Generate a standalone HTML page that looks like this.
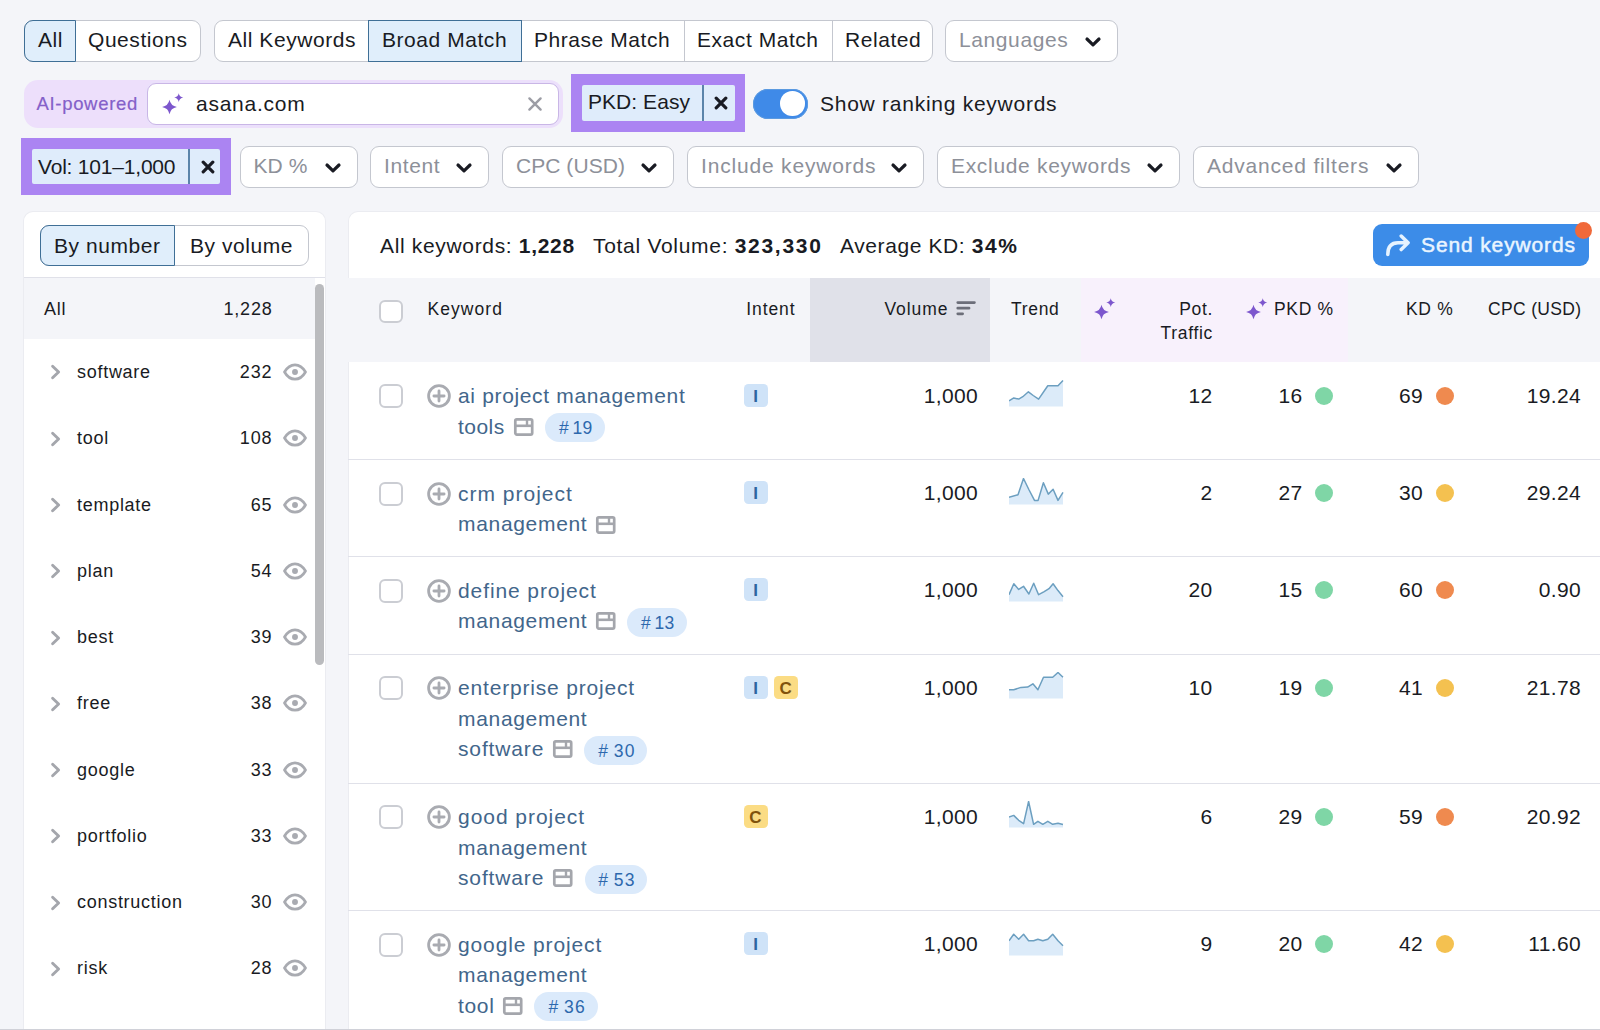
<!DOCTYPE html>
<html lang="en">
<head>
<meta charset="utf-8">
<title>Keyword Magic Tool</title>
<style>
*{box-sizing:border-box;margin:0;padding:0}
html,body{width:1600px;height:1030px;overflow:hidden}
body{background:#f4f5f9;font-family:"Liberation Sans",Arial,sans-serif;color:#191b23;position:relative;font-size:21px}
.abs{position:absolute}
.t{position:absolute;white-space:nowrap;line-height:1}
/* pill button groups */
.grp{position:absolute;height:41.5px;background:#fff;border:1px solid #c4c7cf;border-radius:9px}
.seg{position:absolute;top:-1px;height:41.5px;border-left:1px solid #c4c7cf}
.sel{position:absolute;height:41.5px;background:#e0eefb;border:1.5px solid #3f6f96}
.lbl{position:absolute;top:20px;height:42px;line-height:40px;font-size:21px;letter-spacing:.55px;white-space:nowrap;color:#191b23}
.dd{position:absolute;height:42px;background:#fff;border:1px solid #c4c7cf;border-radius:9px}
.dd span{position:absolute;left:13px;top:0;line-height:38px;font-size:21px;letter-spacing:.6px;color:#8d9099;white-space:nowrap}
.dd svg{position:absolute;right:15px;top:15px}
.chip{position:absolute;background:#ab84f2}
.chip .in{position:absolute;background:#dfecfb;border-radius:2px}
.chip .tx{position:absolute;font-size:21px;letter-spacing:.5px;white-space:nowrap;line-height:35px;color:#191b23}
.chip .dv{position:absolute;width:1.5px;background:#5b84aa}
/* panels */
.panel{position:absolute;background:#fff}
</style>
</head>
<body>

<!-- ===== Row 1: tab groups ===== -->
<div class="grp" style="left:24px;top:20px;width:177px"></div>
<div class="sel" style="left:24px;top:20px;width:52px;border-radius:9px 0 0 9px"></div>
<div class="lbl" style="left:38px">All</div>
<div class="lbl" style="left:88px">Questions</div>

<div class="grp" style="left:214px;top:20px;width:719px"></div>
<div class="sel" style="left:368px;top:20px;width:154px"></div>
<div class="abs" style="left:684px;top:21px;width:1px;height:40px;background:#c4c7cf"></div>
<div class="abs" style="left:832px;top:21px;width:1px;height:40px;background:#c4c7cf"></div>
<div class="lbl" style="left:228px">All Keywords</div>
<div class="lbl" style="left:382px">Broad Match</div>
<div class="lbl" style="left:534px">Phrase Match</div>
<div class="lbl" style="left:697px">Exact Match</div>
<div class="lbl" style="left:845px">Related</div>

<div class="dd" style="left:945px;top:20px;width:173px"><span>Languages</span>
<svg width="18" height="12" viewBox="0 0 18 12"><path d="M3 3 L9 8.8 L15 3" fill="none" stroke="#191b23" stroke-width="3.2" stroke-linecap="round" stroke-linejoin="round"/></svg></div>

<!-- ===== Row 2: AI-powered input, PKD chip, toggle ===== -->
<div class="abs" style="left:24px;top:80px;width:539px;height:48px;background:#eddffb;border-radius:14px"></div>
<div class="t" style="left:36.5px;top:94.5px;font-size:18.5px;letter-spacing:.68px;color:#8460c9;-webkit-text-stroke:.2px #8460c9">AI-powered</div>
<div class="abs" style="left:147.3px;top:83.3px;width:411.5px;height:41.4px;background:#fff;border:1.5px solid #c9b6e6;border-radius:9px;box-shadow:0 0 0 2px #ebe0fb"></div>
<svg class="abs" style="left:160.75px;top:92px" width="24" height="24" viewBox="0 0 24 24"><path d="M8.5 7.8 Q9.68 13.85 15.9 15 Q9.68 16.15 8.5 22.2 Q7.32 16.15 1.1 15 Q7.32 13.85 8.5 7.8Z" fill="#7d57cd"/><path d="M17.75 1.2 Q18.47 4.9 22.25 5.6 Q18.47 6.3 17.75 10 Q17.03 6.3 13.25 5.6 Q17.03 4.9 17.75 1.2Z" fill="#7d57cd"/></svg>
<div class="t" style="left:196px;top:93px;font-size:21px;letter-spacing:.75px">asana.com</div>
<svg class="abs" style="left:527.1px;top:95.900px" width="16" height="16" viewBox="0 0 16 16"><path d="M2.400 2.400 L13.600 13.600 M13.600 2.400 L2.400 13.600" stroke="#9c9da5" stroke-width="2.400" stroke-linecap="round"/></svg>

<div class="chip" style="left:571px;top:74px;width:174px;height:57.7px">
  <div class="in" style="left:10.5px;top:11.2px;width:153px;height:35.6px"></div>
  <div class="dv" style="left:131px;top:11.2px;height:35.6px"></div>
  <div class="tx" style="left:17px;top:10.3px;letter-spacing:.05px">PKD: Easy</div>
  <svg class="abs" style="left:143.2px;top:22px" width="14" height="14" viewBox="0 0 14 14"><path d="M2.2 2.2 L11.8 11.8 M11.8 2.2 L2.2 11.8" stroke="#191b23" stroke-width="3.2" stroke-linecap="round"/></svg>
</div>

<div class="abs" style="left:753px;top:88.5px;width:55px;height:30px;border-radius:15px;background:#3f8ae8;box-shadow:0 0 0 1px #5b9ae0 inset"></div>
<div class="abs" style="left:780.3px;top:91.3px;width:24.5px;height:24.5px;border-radius:50%;background:#fff"></div>
<div class="t" style="left:820px;top:93px;font-size:21px;letter-spacing:.74px">Show ranking keywords</div>

<!-- ===== Row 3: filters ===== -->
<div class="chip" style="left:21px;top:137.5px;width:209.5px;height:57.5px">
  <div class="in" style="left:11px;top:11.3px;width:188px;height:35.4px"></div>
  <div class="dv" style="left:167px;top:11.3px;height:35.4px"></div>
  <div class="tx" style="left:17px;top:11.3px;letter-spacing:-.2px">Vol: 101–1,000</div>
  <svg class="abs" style="left:179.8px;top:22.8px" width="14" height="14" viewBox="0 0 14 14"><path d="M2.2 2.2 L11.8 11.8 M11.8 2.2 L2.2 11.8" stroke="#191b23" stroke-width="3.2" stroke-linecap="round"/></svg>
</div>

<div class="dd" style="left:240px;top:146px;width:118px"><span style="letter-spacing:.1px;left:12.5px">KD %</span><svg width="18" height="12" viewBox="0 0 18 12"><path d="M3 3 L9 8.8 L15 3" fill="none" stroke="#191b23" stroke-width="3.2" stroke-linecap="round" stroke-linejoin="round"/></svg></div>
<div class="dd" style="left:370px;top:146px;width:119px"><span>Intent</span><svg width="18" height="12" viewBox="0 0 18 12"><path d="M3 3 L9 8.8 L15 3" fill="none" stroke="#191b23" stroke-width="3.2" stroke-linecap="round" stroke-linejoin="round"/></svg></div>
<div class="dd" style="left:502px;top:146px;width:172px"><span style="letter-spacing:.05px">CPC (USD)</span><svg width="18" height="12" viewBox="0 0 18 12"><path d="M3 3 L9 8.8 L15 3" fill="none" stroke="#191b23" stroke-width="3.2" stroke-linecap="round" stroke-linejoin="round"/></svg></div>
<div class="dd" style="left:687px;top:146px;width:237px"><span style="letter-spacing:.82px">Include keywords</span><svg width="18" height="12" viewBox="0 0 18 12"><path d="M3 3 L9 8.8 L15 3" fill="none" stroke="#191b23" stroke-width="3.2" stroke-linecap="round" stroke-linejoin="round"/></svg></div>
<div class="dd" style="left:937px;top:146px;width:243px"><span style="letter-spacing:.68px">Exclude keywords</span><svg width="18" height="12" viewBox="0 0 18 12"><path d="M3 3 L9 8.8 L15 3" fill="none" stroke="#191b23" stroke-width="3.2" stroke-linecap="round" stroke-linejoin="round"/></svg></div>
<div class="dd" style="left:1193px;top:146px;width:226px"><span style="letter-spacing:.8px">Advanced filters</span><svg width="18" height="12" viewBox="0 0 18 12"><path d="M3 3 L9 8.8 L15 3" fill="none" stroke="#191b23" stroke-width="3.2" stroke-linecap="round" stroke-linejoin="round"/></svg></div>

<!-- ===== Left panel ===== -->
<style>
.lp-t{position:absolute;font-size:18px;letter-spacing:.72px;line-height:20px;white-space:nowrap;color:#191b23}
.lp-n{position:absolute;font-size:18px;letter-spacing:.8px;line-height:20px;white-space:nowrap;color:#191b23;text-align:right;width:80px}
</style>
<div class="panel" style="left:24px;top:212px;width:301px;height:830px;border-radius:9px 9px 0 0;box-shadow:0 0 0 1px #ebecf1"></div>
<div class="grp" style="left:40px;top:224.5px;width:269px"></div>
<div class="sel" style="left:40px;top:224.5px;width:135px;border-radius:9px 0 0 9px"></div>
<div class="lbl" style="left:54px;top:225.500px">By number</div>
<div class="lbl" style="left:190px;top:225.500px">By volume</div>
<div class="abs" style="left:24px;top:277px;width:301px;height:1px;background:#e0e1e9"></div>
<div class="abs" style="left:24px;top:278px;width:291px;height:61px;background:#f4f5f9"></div>
<div class="lp-t" style="left:44px;top:298.5px">All</div>
<div class="lp-n" style="left:192.5px;top:298.5px">1,228</div>
<div class="abs" style="left:315px;top:284px;width:8.5px;height:381px;border-radius:5px;background:#babbbe"></div>
<svg class="abs" style="left:50px;top:363px" width="12" height="18" viewBox="0 0 12 18"><path d="M2.6 3.2 L8.6 9 L2.6 14.8" fill="none" stroke="#a4a6ac" stroke-width="2.9" stroke-linecap="round" stroke-linejoin="round"/></svg>
<div class="lp-t" style="left:77px;top:361.5px">software</div>
<div class="lp-n" style="left:192.3px;top:361.5px">232</div>
<svg class="abs" style="left:283px;top:362.5px" width="24" height="18" viewBox="0 0 24 18"><path d="M1.5 9 C4.5 3.8 8 1.8 12 1.8 C16 1.8 19.5 3.8 22.5 9 C19.5 14.2 16 16.2 12 16.2 C8 16.2 4.5 14.2 1.5 9Z" fill="none" stroke="#a9abb1" stroke-width="2.7" stroke-linejoin="round"/><circle cx="12" cy="9" r="2.95" fill="#a9abb1"/></svg>
<svg class="abs" style="left:50px;top:429.5px" width="12" height="18" viewBox="0 0 12 18"><path d="M2.6 3.2 L8.6 9 L2.6 14.8" fill="none" stroke="#a4a6ac" stroke-width="2.9" stroke-linecap="round" stroke-linejoin="round"/></svg>
<div class="lp-t" style="left:77px;top:428.0px">tool</div>
<div class="lp-n" style="left:192.3px;top:428.0px">108</div>
<svg class="abs" style="left:283px;top:429.0px" width="24" height="18" viewBox="0 0 24 18"><path d="M1.5 9 C4.5 3.8 8 1.8 12 1.8 C16 1.8 19.5 3.8 22.5 9 C19.5 14.2 16 16.2 12 16.2 C8 16.2 4.5 14.2 1.5 9Z" fill="none" stroke="#a9abb1" stroke-width="2.7" stroke-linejoin="round"/><circle cx="12" cy="9" r="2.95" fill="#a9abb1"/></svg>
<svg class="abs" style="left:50px;top:496px" width="12" height="18" viewBox="0 0 12 18"><path d="M2.6 3.2 L8.6 9 L2.6 14.8" fill="none" stroke="#a4a6ac" stroke-width="2.9" stroke-linecap="round" stroke-linejoin="round"/></svg>
<div class="lp-t" style="left:77px;top:494.5px">template</div>
<div class="lp-n" style="left:192.3px;top:494.5px">65</div>
<svg class="abs" style="left:283px;top:495.5px" width="24" height="18" viewBox="0 0 24 18"><path d="M1.5 9 C4.5 3.8 8 1.8 12 1.8 C16 1.8 19.5 3.8 22.5 9 C19.5 14.2 16 16.2 12 16.2 C8 16.2 4.5 14.2 1.5 9Z" fill="none" stroke="#a9abb1" stroke-width="2.7" stroke-linejoin="round"/><circle cx="12" cy="9" r="2.95" fill="#a9abb1"/></svg>
<svg class="abs" style="left:50px;top:562px" width="12" height="18" viewBox="0 0 12 18"><path d="M2.6 3.2 L8.6 9 L2.6 14.8" fill="none" stroke="#a4a6ac" stroke-width="2.9" stroke-linecap="round" stroke-linejoin="round"/></svg>
<div class="lp-t" style="left:77px;top:560.5px">plan</div>
<div class="lp-n" style="left:192.3px;top:560.5px">54</div>
<svg class="abs" style="left:283px;top:561.5px" width="24" height="18" viewBox="0 0 24 18"><path d="M1.5 9 C4.5 3.8 8 1.8 12 1.8 C16 1.8 19.5 3.8 22.5 9 C19.5 14.2 16 16.2 12 16.2 C8 16.2 4.5 14.2 1.5 9Z" fill="none" stroke="#a9abb1" stroke-width="2.7" stroke-linejoin="round"/><circle cx="12" cy="9" r="2.95" fill="#a9abb1"/></svg>
<svg class="abs" style="left:50px;top:628.5px" width="12" height="18" viewBox="0 0 12 18"><path d="M2.6 3.2 L8.6 9 L2.6 14.8" fill="none" stroke="#a4a6ac" stroke-width="2.9" stroke-linecap="round" stroke-linejoin="round"/></svg>
<div class="lp-t" style="left:77px;top:627.0px">best</div>
<div class="lp-n" style="left:192.3px;top:627.0px">39</div>
<svg class="abs" style="left:283px;top:628.0px" width="24" height="18" viewBox="0 0 24 18"><path d="M1.5 9 C4.5 3.8 8 1.8 12 1.8 C16 1.8 19.5 3.8 22.5 9 C19.5 14.2 16 16.2 12 16.2 C8 16.2 4.5 14.2 1.5 9Z" fill="none" stroke="#a9abb1" stroke-width="2.7" stroke-linejoin="round"/><circle cx="12" cy="9" r="2.95" fill="#a9abb1"/></svg>
<svg class="abs" style="left:50px;top:694.5px" width="12" height="18" viewBox="0 0 12 18"><path d="M2.6 3.2 L8.6 9 L2.6 14.8" fill="none" stroke="#a4a6ac" stroke-width="2.9" stroke-linecap="round" stroke-linejoin="round"/></svg>
<div class="lp-t" style="left:77px;top:693.0px">free</div>
<div class="lp-n" style="left:192.3px;top:693.0px">38</div>
<svg class="abs" style="left:283px;top:694.0px" width="24" height="18" viewBox="0 0 24 18"><path d="M1.5 9 C4.5 3.8 8 1.8 12 1.8 C16 1.8 19.5 3.8 22.5 9 C19.5 14.2 16 16.2 12 16.2 C8 16.2 4.5 14.2 1.5 9Z" fill="none" stroke="#a9abb1" stroke-width="2.7" stroke-linejoin="round"/><circle cx="12" cy="9" r="2.95" fill="#a9abb1"/></svg>
<svg class="abs" style="left:50px;top:761px" width="12" height="18" viewBox="0 0 12 18"><path d="M2.6 3.2 L8.6 9 L2.6 14.8" fill="none" stroke="#a4a6ac" stroke-width="2.9" stroke-linecap="round" stroke-linejoin="round"/></svg>
<div class="lp-t" style="left:77px;top:759.5px">google</div>
<div class="lp-n" style="left:192.3px;top:759.5px">33</div>
<svg class="abs" style="left:283px;top:760.5px" width="24" height="18" viewBox="0 0 24 18"><path d="M1.5 9 C4.5 3.8 8 1.8 12 1.8 C16 1.8 19.5 3.8 22.5 9 C19.5 14.2 16 16.2 12 16.2 C8 16.2 4.5 14.2 1.5 9Z" fill="none" stroke="#a9abb1" stroke-width="2.7" stroke-linejoin="round"/><circle cx="12" cy="9" r="2.95" fill="#a9abb1"/></svg>
<svg class="abs" style="left:50px;top:827px" width="12" height="18" viewBox="0 0 12 18"><path d="M2.6 3.2 L8.6 9 L2.6 14.8" fill="none" stroke="#a4a6ac" stroke-width="2.9" stroke-linecap="round" stroke-linejoin="round"/></svg>
<div class="lp-t" style="left:77px;top:825.5px">portfolio</div>
<div class="lp-n" style="left:192.3px;top:825.5px">33</div>
<svg class="abs" style="left:283px;top:826.5px" width="24" height="18" viewBox="0 0 24 18"><path d="M1.5 9 C4.5 3.8 8 1.8 12 1.8 C16 1.8 19.5 3.8 22.5 9 C19.5 14.2 16 16.2 12 16.2 C8 16.2 4.5 14.2 1.5 9Z" fill="none" stroke="#a9abb1" stroke-width="2.7" stroke-linejoin="round"/><circle cx="12" cy="9" r="2.95" fill="#a9abb1"/></svg>
<svg class="abs" style="left:50px;top:893.5px" width="12" height="18" viewBox="0 0 12 18"><path d="M2.6 3.2 L8.6 9 L2.6 14.8" fill="none" stroke="#a4a6ac" stroke-width="2.9" stroke-linecap="round" stroke-linejoin="round"/></svg>
<div class="lp-t" style="left:77px;top:892.0px">construction</div>
<div class="lp-n" style="left:192.3px;top:892.0px">30</div>
<svg class="abs" style="left:283px;top:893.0px" width="24" height="18" viewBox="0 0 24 18"><path d="M1.5 9 C4.5 3.8 8 1.8 12 1.8 C16 1.8 19.5 3.8 22.5 9 C19.5 14.2 16 16.2 12 16.2 C8 16.2 4.5 14.2 1.5 9Z" fill="none" stroke="#a9abb1" stroke-width="2.7" stroke-linejoin="round"/><circle cx="12" cy="9" r="2.95" fill="#a9abb1"/></svg>
<svg class="abs" style="left:50px;top:959.5px" width="12" height="18" viewBox="0 0 12 18"><path d="M2.6 3.2 L8.6 9 L2.6 14.8" fill="none" stroke="#a4a6ac" stroke-width="2.9" stroke-linecap="round" stroke-linejoin="round"/></svg>
<div class="lp-t" style="left:77px;top:958.0px">risk</div>
<div class="lp-n" style="left:192.3px;top:958.0px">28</div>
<svg class="abs" style="left:283px;top:959.0px" width="24" height="18" viewBox="0 0 24 18"><path d="M1.5 9 C4.5 3.8 8 1.8 12 1.8 C16 1.8 19.5 3.8 22.5 9 C19.5 14.2 16 16.2 12 16.2 C8 16.2 4.5 14.2 1.5 9Z" fill="none" stroke="#a9abb1" stroke-width="2.7" stroke-linejoin="round"/><circle cx="12" cy="9" r="2.95" fill="#a9abb1"/></svg>

<!-- ===== Table panel ===== -->
<style>
.hd{position:absolute;font-size:17.5px;letter-spacing:.68px;line-height:20px;white-space:nowrap;color:#191b23}
.kw{position:absolute;left:458px;font-size:21px;letter-spacing:.66px;line-height:30.5px;white-space:nowrap;color:#42668b}
.num{position:absolute;font-size:21px;letter-spacing:.35px;line-height:24px;white-space:nowrap;text-align:right;width:120px;color:#191b23}
.cb{position:absolute;left:379.2px;width:23.8px;height:23.8px;border:2px solid #cbcdd3;border-radius:6px;background:#fff}
.bI,.bC{position:absolute;width:24px;height:23.2px;border-radius:4.500px;font-size:17px;font-weight:bold;line-height:25px;text-align:center}
.bI{background:#cfe3f8;color:#2d64a0}
.bC{background:#fbdc84;color:#80520c}
.pos{height:29px;border-radius:15px;background:#dbeafb;color:#2d68ad;font-size:17.5px;letter-spacing:.15px;line-height:30.5px;text-align:center;white-space:nowrap}
.dot{position:absolute;width:18px;height:18px;border-radius:50%}
.sep{position:absolute;left:348px;width:1260px;height:1px;background:#e0e1e9}
</style>
<div class="panel" style="left:348.5px;top:212px;width:1260px;height:830px;border-radius:9px 0 0 0;box-shadow:0 0 0 1px #ebecf1"></div>
<div class="t" style="left:380px;top:235px;font-size:21px;letter-spacing:.66px">All keywords: <b style="letter-spacing:.7px">1,228</b></div>
<div class="t" style="left:593px;top:235px;font-size:21px;letter-spacing:.7px">Total Volume: <b style="letter-spacing:1.7px">323,330</b></div>
<div class="t" style="left:840px;top:235px;font-size:21px;letter-spacing:.6px">Average KD: <b style="letter-spacing:1.6px">34%</b></div>
<div class="abs" style="left:1373px;top:224.3px;width:216.4px;height:41.7px;border-radius:9px;background:#3c8ce8"></div>
<svg class="abs" style="left:1384px;top:233px" width="28" height="26" viewBox="0 0 28 26"><path d="M3.8 21.6 C3.8 13.4 7 9.8 14 9.8 L23 9.8 M17.2 3 L24.1 9.800 L17.2 16.6" fill="none" stroke="#e6f3ff" stroke-width="3.500" stroke-linecap="round" stroke-linejoin="round"/></svg>
<div class="t" style="left:1421px;top:233.5px;font-size:21px;letter-spacing:.87px;color:#eaf5ff;-webkit-text-stroke:.5px #eaf5ff">Send keywords</div>
<div class="abs" style="left:1575px;top:221.600px;width:17.200px;height:17.200px;border-radius:50%;background:#f0693a"></div>

<div class="abs" style="left:348px;top:278px;width:1260px;height:84px;background:#f4f5f9"></div>
<div class="abs" style="left:810px;top:278px;width:180px;height:84px;background:#e0e1e9"></div>
<div class="abs" style="left:1081px;top:278px;width:267px;height:84px;background:#f8f1fc"></div>
<div class="cb" style="top:299.6px"></div>
<div class="hd" style="left:427.5px;top:298.5px;letter-spacing:1.05px">Keyword</div>
<div class="hd" style="left:746.3px;top:298.5px;letter-spacing:.9px">Intent</div>
<div class="hd" style="left:884.5px;top:298.5px;letter-spacing:.9px">Volume</div>
<svg class="abs" style="left:956px;top:299px" width="20" height="18" viewBox="0 0 20 18"><path d="M1.8 3.6 H18.4 M1.8 9.2 H13 M1.8 14.8 H6.6" stroke="#6c6e79" stroke-width="2.8" stroke-linecap="round"/></svg>
<div class="hd" style="left:1011px;top:298.5px">Trend</div>
<svg class="abs" style="left:1093.4px;top:297px" width="24" height="24" viewBox="0 0 24 24"><path d="M8.5 7.8 Q9.68 13.85 15.9 15 Q9.68 16.15 8.5 22.2 Q7.32 16.15 1.1 15 Q7.32 13.85 8.5 7.8Z" fill="#7d57cd"/><path d="M17.75 1.2 Q18.47 4.9 22.25 5.6 Q18.47 6.3 17.75 10 Q17.03 6.3 13.25 5.6 Q17.03 4.9 17.75 1.2Z" fill="#7d57cd"/></svg>
<div class="hd" style="left:1093px;width:120px;text-align:right;line-height:24px;top:296.5px">Pot.<br>Traffic</div>
<svg class="abs" style="left:1244.5px;top:297px" width="24" height="24" viewBox="0 0 24 24"><path d="M8.5 7.8 Q9.68 13.85 15.9 15 Q9.68 16.15 8.5 22.2 Q7.32 16.15 1.1 15 Q7.32 13.85 8.5 7.8Z" fill="#7d57cd"/><path d="M17.75 1.2 Q18.47 4.9 22.25 5.6 Q18.47 6.3 17.75 10 Q17.03 6.3 13.25 5.6 Q17.03 4.9 17.75 1.2Z" fill="#7d57cd"/></svg>
<div class="hd" style="left:1274px;top:298.5px">PKD %</div>
<div class="hd" style="left:1406px;top:298.5px">KD %</div>
<div class="hd" style="left:1488px;top:298.5px;letter-spacing:.33px">CPC (USD)</div>

<div class="cb" style="top:384.3px"></div>
<svg class="abs" style="left:426.4px;top:383px" width="26" height="26" viewBox="0 0 26 26"><circle cx="13" cy="13" r="10.4" fill="none" stroke="#a9abb1" stroke-width="2.8"/><path d="M13 7.900 V18.100 M7.900 13 H18.100" stroke="#a9abb1" stroke-width="2.8" stroke-linecap="round"/></svg>
<div class="kw" style="top:381.25px;letter-spacing:0.655px">ai project management</div>
<div class="kw" style="top:411.75px;letter-spacing:0.45px">tools</div>
<svg class="abs" style="left:513.3px;top:416.55px" width="22" height="20" viewBox="0 0 22 20"><rect x="2.3" y="2.4" width="16.9" height="15.2" rx="1.5" fill="none" stroke="#a4a6ac" stroke-width="2.7"/><path d="M2 8.8 H19.5" stroke="#a4a6ac" stroke-width="2.6"/><path d="M14 3 V8" stroke="#a4a6ac" stroke-width="2.4"/></svg>
<div class="pos" style="position:absolute;left:545.4px;top:413.0px;width:59.2px;padding-left:1.5px;letter-spacing:0.15px">#&#8201;19</div>
<div class="bI" style="left:743.5px;top:383.8px">I</div>
<div class="num" style="left:858px;top:383.5px">1,000</div>
<svg class="abs" style="left:1008.5px;top:380px" width="55" height="28" viewBox="0 0 55 28"><polygon points="0,20.8 4.8,17.9 9.7,19.1 13.8,16.7 19.4,11.8 24.2,15.5 29.6,19.1 38.8,5.8 49,5.8 54,0.5 54,26.5 0,26.5" fill="#dcebf9"/><polyline points="0,20.8 4.8,17.9 9.7,19.1 13.8,16.7 19.4,11.8 24.2,15.5 29.6,19.1 38.8,5.8 49,5.8 54,0.5" fill="none" stroke="#6c9fc0" stroke-width="1.5" stroke-linejoin="round"/></svg>
<div class="num" style="left:1092.5px;top:383.5px">12</div>
<div class="num" style="left:1182.5px;top:383.5px">16</div>
<div class="dot" style="left:1315.2px;top:386.8px;background:#7fd6a6"></div>
<div class="num" style="left:1303px;top:383.5px">69</div>
<div class="dot" style="left:1435.8px;top:386.8px;background:#ef8a4f"></div>
<div class="num" style="left:1461px;top:383.5px">19.24</div>
<div class="sep" style="top:459.0px"></div>
<div class="cb" style="top:481.8px"></div>
<svg class="abs" style="left:426.4px;top:480.5px" width="26" height="26" viewBox="0 0 26 26"><circle cx="13" cy="13" r="10.4" fill="none" stroke="#a9abb1" stroke-width="2.8"/><path d="M13 7.900 V18.100 M7.900 13 H18.100" stroke="#a9abb1" stroke-width="2.8" stroke-linecap="round"/></svg>
<div class="kw" style="top:478.75px;letter-spacing:1.0px">crm project</div>
<div class="kw" style="top:509.25px;letter-spacing:0.68px">management</div>
<svg class="abs" style="left:595.15px;top:514.75px" width="22" height="20" viewBox="0 0 22 20"><rect x="2.3" y="2.4" width="16.9" height="15.2" rx="1.5" fill="none" stroke="#a4a6ac" stroke-width="2.7"/><path d="M2 8.8 H19.5" stroke="#a4a6ac" stroke-width="2.6"/><path d="M14 3 V8" stroke="#a4a6ac" stroke-width="2.4"/></svg>
<div class="bI" style="left:743.5px;top:481.3px">I</div>
<div class="num" style="left:858px;top:481.0px">1,000</div>
<svg class="abs" style="left:1008.5px;top:477.5px" width="55" height="28" viewBox="0 0 55 28"><polygon points="0,19.3 9,16.8 14.5,0.5 20.1,12 25.5,22.4 29.1,22.4 34.4,4.7 39.3,16.1 44.1,11.3 49,22.4 54,14.4 54,26.5 0,26.5" fill="#dcebf9"/><polyline points="0,19.3 9,16.8 14.5,0.5 20.1,12 25.5,22.4 29.1,22.4 34.4,4.7 39.3,16.1 44.1,11.3 49,22.4 54,14.4" fill="none" stroke="#6c9fc0" stroke-width="1.5" stroke-linejoin="round"/></svg>
<div class="num" style="left:1092.5px;top:481.0px">2</div>
<div class="num" style="left:1182.5px;top:481.0px">27</div>
<div class="dot" style="left:1315.2px;top:484.3px;background:#7fd6a6"></div>
<div class="num" style="left:1303px;top:481.0px">30</div>
<div class="dot" style="left:1435.8px;top:484.3px;background:#f4c150"></div>
<div class="num" style="left:1461px;top:481.0px">29.24</div>
<div class="sep" style="top:556.0px"></div>
<div class="cb" style="top:578.8px"></div>
<svg class="abs" style="left:426.4px;top:577.5px" width="26" height="26" viewBox="0 0 26 26"><circle cx="13" cy="13" r="10.4" fill="none" stroke="#a9abb1" stroke-width="2.8"/><path d="M13 7.900 V18.100 M7.900 13 H18.100" stroke="#a9abb1" stroke-width="2.8" stroke-linecap="round"/></svg>
<div class="kw" style="top:575.75px;letter-spacing:0.9px">define project</div>
<div class="kw" style="top:606.25px;letter-spacing:0.68px">management</div>
<svg class="abs" style="left:595.15px;top:611.05px" width="22" height="20" viewBox="0 0 22 20"><rect x="2.3" y="2.4" width="16.9" height="15.2" rx="1.5" fill="none" stroke="#a4a6ac" stroke-width="2.7"/><path d="M2 8.8 H19.5" stroke="#a4a6ac" stroke-width="2.6"/><path d="M14 3 V8" stroke="#a4a6ac" stroke-width="2.4"/></svg>
<div class="pos" style="position:absolute;left:627.25px;top:607.5px;width:59.25px;padding-left:1.5px;letter-spacing:0.15px">#&#8201;13</div>
<div class="bI" style="left:743.5px;top:578.3px">I</div>
<div class="num" style="left:858px;top:578.0px">1,000</div>
<svg class="abs" style="left:1008.5px;top:574.5px" width="55" height="28" viewBox="0 0 55 28"><polygon points="0,19.7 4.8,8.8 9.7,14.4 14.5,11.3 19.9,19 24.7,8.3 29.6,19.7 35.2,16.6 40,13.7 44.1,8.8 49,15.6 54,21.7 54,26.5 0,26.5" fill="#dcebf9"/><polyline points="0,19.7 4.8,8.8 9.7,14.4 14.5,11.3 19.9,19 24.7,8.3 29.6,19.7 35.2,16.6 40,13.7 44.1,8.8 49,15.6 54,21.7" fill="none" stroke="#6c9fc0" stroke-width="1.5" stroke-linejoin="round"/></svg>
<div class="num" style="left:1092.5px;top:578.0px">20</div>
<div class="num" style="left:1182.5px;top:578.0px">15</div>
<div class="dot" style="left:1315.2px;top:581.3px;background:#7fd6a6"></div>
<div class="num" style="left:1303px;top:578.0px">60</div>
<div class="dot" style="left:1435.8px;top:581.3px;background:#ef8a4f"></div>
<div class="num" style="left:1461px;top:578.0px">0.90</div>
<div class="sep" style="top:653.5px"></div>
<div class="cb" style="top:676.3px"></div>
<svg class="abs" style="left:426.4px;top:675px" width="26" height="26" viewBox="0 0 26 26"><circle cx="13" cy="13" r="10.4" fill="none" stroke="#a9abb1" stroke-width="2.8"/><path d="M13 7.900 V18.100 M7.900 13 H18.100" stroke="#a9abb1" stroke-width="2.8" stroke-linecap="round"/></svg>
<div class="kw" style="top:673.25px;letter-spacing:0.82px">enterprise project</div>
<div class="kw" style="top:703.75px;letter-spacing:0.68px">management</div>
<div class="kw" style="top:734.25px;letter-spacing:0.86px">software</div>
<svg class="abs" style="left:552.15px;top:739.05px" width="22" height="20" viewBox="0 0 22 20"><rect x="2.3" y="2.4" width="16.9" height="15.2" rx="1.5" fill="none" stroke="#a4a6ac" stroke-width="2.7"/><path d="M2 8.8 H19.5" stroke="#a4a6ac" stroke-width="2.6"/><path d="M14 3 V8" stroke="#a4a6ac" stroke-width="2.4"/></svg>
<div class="pos" style="position:absolute;left:584.25px;top:735.5px;width:63px;padding-left:2.4px;letter-spacing:1.15px">#&#8201;30</div>
<div class="bI" style="left:743.5px;top:675.8px">I</div>
<div class="bC" style="left:773.7px;top:675.8px">C</div>
<div class="num" style="left:858px;top:675.5px">1,000</div>
<svg class="abs" style="left:1008.5px;top:672px" width="55" height="28" viewBox="0 0 55 28"><polygon points="0,17.8 4.7,17.8 12,15.4 18.6,15.1 23.9,11.8 28.9,17.8 34.5,5.2 43.7,5.2 49,0.5 54,5.2 54,26.5 0,26.5" fill="#dcebf9"/><polyline points="0,17.8 4.7,17.8 12,15.4 18.6,15.1 23.9,11.8 28.9,17.8 34.5,5.2 43.7,5.2 49,0.5 54,5.2" fill="none" stroke="#6c9fc0" stroke-width="1.5" stroke-linejoin="round"/></svg>
<div class="num" style="left:1092.5px;top:675.5px">10</div>
<div class="num" style="left:1182.5px;top:675.5px">19</div>
<div class="dot" style="left:1315.2px;top:678.8px;background:#7fd6a6"></div>
<div class="num" style="left:1303px;top:675.5px">41</div>
<div class="dot" style="left:1435.8px;top:678.8px;background:#f4c150"></div>
<div class="num" style="left:1461px;top:675.5px">21.78</div>
<div class="sep" style="top:782.5px"></div>
<div class="cb" style="top:805.3px"></div>
<svg class="abs" style="left:426.4px;top:804px" width="26" height="26" viewBox="0 0 26 26"><circle cx="13" cy="13" r="10.4" fill="none" stroke="#a9abb1" stroke-width="2.8"/><path d="M13 7.900 V18.100 M7.900 13 H18.100" stroke="#a9abb1" stroke-width="2.8" stroke-linecap="round"/></svg>
<div class="kw" style="top:802.25px;letter-spacing:0.96px">good project</div>
<div class="kw" style="top:832.75px;letter-spacing:0.68px">management</div>
<div class="kw" style="top:863.25px;letter-spacing:0.86px">software</div>
<svg class="abs" style="left:552.15px;top:868.05px" width="22" height="20" viewBox="0 0 22 20"><rect x="2.3" y="2.4" width="16.9" height="15.2" rx="1.5" fill="none" stroke="#a4a6ac" stroke-width="2.7"/><path d="M2 8.8 H19.5" stroke="#a4a6ac" stroke-width="2.6"/><path d="M14 3 V8" stroke="#a4a6ac" stroke-width="2.4"/></svg>
<div class="pos" style="position:absolute;left:584.6px;top:864.5px;width:62.3px;padding-left:2.4px;letter-spacing:1.15px">#&#8201;53</div>
<div class="bC" style="left:743.5px;top:804.8px">C</div>
<div class="num" style="left:858px;top:804.5px">1,000</div>
<svg class="abs" style="left:1008.5px;top:801px" width="55" height="28" viewBox="0 0 55 28"><polygon points="0,16 4.7,14.4 9.7,19.3 14.6,22.6 19.6,0.5 24.6,23.3 28.9,20.3 33.8,23.3 38.8,20.3 43.7,23.3 49,22.3 54,23.6 54,26.5 0,26.5" fill="#dcebf9"/><polyline points="0,16 4.7,14.4 9.7,19.3 14.6,22.6 19.6,0.5 24.6,23.3 28.9,20.3 33.8,23.3 38.8,20.3 43.7,23.3 49,22.3 54,23.6" fill="none" stroke="#6c9fc0" stroke-width="1.5" stroke-linejoin="round"/></svg>
<div class="num" style="left:1092.5px;top:804.5px">6</div>
<div class="num" style="left:1182.5px;top:804.5px">29</div>
<div class="dot" style="left:1315.2px;top:807.8px;background:#7fd6a6"></div>
<div class="num" style="left:1303px;top:804.5px">59</div>
<div class="dot" style="left:1435.8px;top:807.8px;background:#ef8a4f"></div>
<div class="num" style="left:1461px;top:804.5px">20.92</div>
<div class="sep" style="top:910.0px"></div>
<div class="cb" style="top:932.8px"></div>
<svg class="abs" style="left:426.4px;top:931.5px" width="26" height="26" viewBox="0 0 26 26"><circle cx="13" cy="13" r="10.4" fill="none" stroke="#a9abb1" stroke-width="2.8"/><path d="M13 7.900 V18.100 M7.900 13 H18.100" stroke="#a9abb1" stroke-width="2.8" stroke-linecap="round"/></svg>
<div class="kw" style="top:929.75px;letter-spacing:0.87px">google project</div>
<div class="kw" style="top:960.25px;letter-spacing:0.68px">management</div>
<div class="kw" style="top:990.75px;letter-spacing:0.67px">tool</div>
<svg class="abs" style="left:501.95px;top:995.55px" width="22" height="20" viewBox="0 0 22 20"><rect x="2.3" y="2.4" width="16.9" height="15.2" rx="1.5" fill="none" stroke="#a4a6ac" stroke-width="2.7"/><path d="M2 8.8 H19.5" stroke="#a4a6ac" stroke-width="2.6"/><path d="M14 3 V8" stroke="#a4a6ac" stroke-width="2.4"/></svg>
<div class="pos" style="position:absolute;left:533.9px;top:992.0px;width:64.1px;padding-left:2.4px;letter-spacing:1.15px">#&#8201;36</div>
<div class="bI" style="left:743.5px;top:932.3px">I</div>
<div class="num" style="left:858px;top:932.0px">1,000</div>
<svg class="abs" style="left:1008.5px;top:928.5px" width="55" height="28" viewBox="0 0 55 28"><polygon points="0,11.8 4.7,5.2 9.7,10.2 14.6,5.2 19.6,11.8 24.6,11.8 28.9,10.2 33.8,11.8 38.8,10.2 43.7,5.2 49,11.8 54,16.8 54,26.5 0,26.5" fill="#dcebf9"/><polyline points="0,11.8 4.7,5.2 9.7,10.2 14.6,5.2 19.6,11.8 24.6,11.8 28.9,10.2 33.8,11.8 38.8,10.2 43.7,5.2 49,11.8 54,16.8" fill="none" stroke="#6c9fc0" stroke-width="1.5" stroke-linejoin="round"/></svg>
<div class="num" style="left:1092.5px;top:932.0px">9</div>
<div class="num" style="left:1182.5px;top:932.0px">20</div>
<div class="dot" style="left:1315.2px;top:935.3px;background:#7fd6a6"></div>
<div class="num" style="left:1303px;top:932.0px">42</div>
<div class="dot" style="left:1435.8px;top:935.3px;background:#f4c150"></div>
<div class="num" style="left:1461px;top:932.0px">11.60</div>
<div class="abs" style="left:0;top:1028.5px;width:1600px;height:1.5px;background:#d0d1d8"></div>

</body>
</html>
